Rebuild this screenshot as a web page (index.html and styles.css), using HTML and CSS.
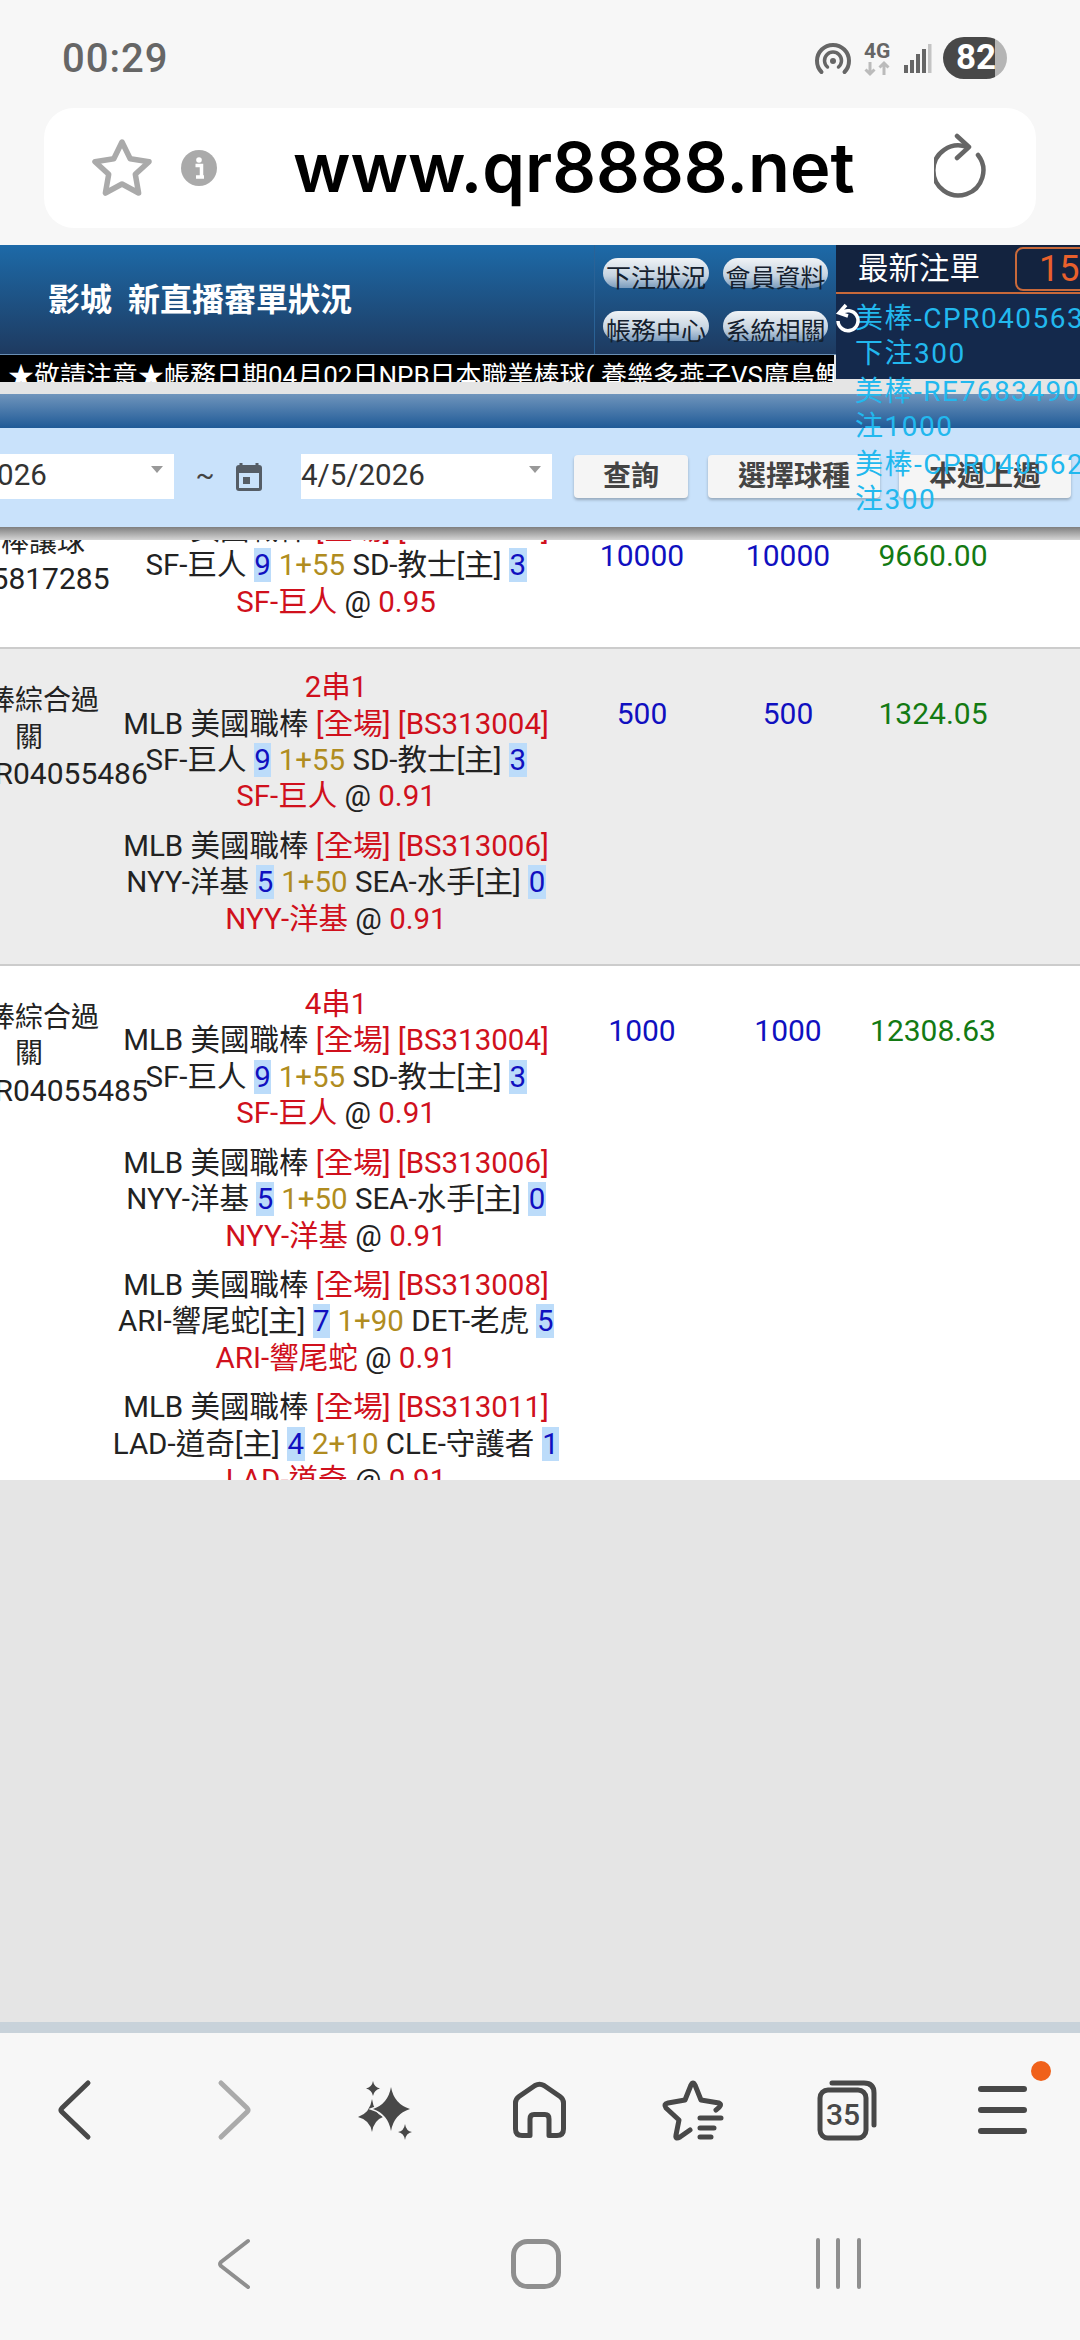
FILE: index.html
```html
<!DOCTYPE html>
<html lang="zh-Hant">
<head>
<meta charset="utf-8">
<title>www.qr8888.net</title>
<link rel="stylesheet" href="styles.css">
</head>
<body>
<div class="app">
  <div class="status">
    <span class="time">00:29</span>
    <div class="status-right">
      <svg class="status-icons" width="125" height="50" viewBox="0 0 125 50">
        <g fill="none" stroke="#666" stroke-linecap="round">
          <path d="M11.5 39A16 16 0 1 1 34.5 39" stroke-width="4"/>
          <path d="M17.5 34A8.5 8.5 0 1 1 28.5 34" stroke-width="3.5"/>
        </g>
        <circle cx="23" cy="28" r="3" fill="#666"/>
        <text class="net" x="54" y="25">4G</text>
        <path d="M60 29V41M55.500 36.500L60 41L64.500 36.500M74 42V30M69.500 34.500L74 30L78.500 34.500" fill="none" stroke="#bbb" stroke-width="3"/>
        <rect x="94" y="32" width="4" height="8" fill="#666"/>
        <rect x="100" y="27" width="4" height="13" fill="#666"/>
        <rect x="106" y="21" width="4" height="19" fill="#666"/>
        <rect x="112" y="16" width="4" height="24" fill="#666"/>
        <rect x="118" y="11" width="3.500" height="29" fill="#c4c4c4"/>
      </svg>
      <div class="battery">82</div>
    </div>
  </div>

  <div class="urlbar">
    <svg class="url-star" width="70" height="70" viewBox="0 0 70 70">
      <polygon points="35,9 43.200,25.700 62,28.700 48.300,41.300 51.600,60 35,51 18.400,60 21.700,41.300 8,28.700 26.800,25.700" fill="none" stroke="#aaa" stroke-width="5.500" stroke-linejoin="round"/>
    </svg>
    <svg class="url-info" width="36" height="36" viewBox="0 0 36 36">
      <circle cx="18" cy="18" r="18" fill="#aaa"/>
      <circle cx="18" cy="10" r="2.800" fill="#fff"/>
      <path d="M14.500 15.500H20.500V26M15 27H23" fill="none" stroke="#fff" stroke-width="3.500"/>
    </svg>
    <span class="url-text">www.qr8888.net</span>
    <svg class="url-reload" width="60" height="70" viewBox="0 0 60 70">
      <path d="M33 14A25 25 0 1 0 44 22" fill="none" stroke="#666" stroke-width="4.500" stroke-linecap="round"/>
      <path d="M23 3L35 14L23 25" fill="none" stroke="#666" stroke-width="4.500" stroke-linecap="round" stroke-linejoin="round"/>
    </svg>
  </div>

  <div class="page">
    <header class="head">
      <div class="head-title">影城&nbsp;&nbsp;新直播審單狀況</div>
      <nav class="head-nav">
        <div class="pill">下注狀況</div>
        <div class="pill">會員資料</div>
        <div class="pill">帳務中心</div>
        <div class="pill">系統相關</div>
      </nav>
    </header>
    <div class="gap-wrap">
      <div class="ticker">★敬請注意★帳務日期04月02日NPB日本職業棒球( 養樂多燕子VS廣島鯉魚</div>
    </div>
    <div class="gray-band"></div>
    <div class="blue-band"></div>
    <div class="filter">
      <div class="date-input"><span>4/5/2026</span><i class="caret"></i></div>
      <span class="tilde">~</span>
      <svg class="calendar" width="30" height="30" viewBox="0 0 30 30">
        <path d="M7 1V5M23 1V5" stroke="#555d66" stroke-width="3"/>
        <path d="M5 3H25Q28 3 28 6V26Q28 29 25 29H5Q2 29 2 26V6Q2 3 5 3Z" fill="#555d66"/>
        <rect x="5" y="11" width="20" height="15" fill="#c9e2fb"/>
        <rect x="9" y="15" width="7" height="7" fill="#555d66"/>
      </svg>
      <div class="date-input date-second"><span>4/5/2026</span><i class="caret"></i></div>
      <div class="btn btn-query">查詢</div>
      <div class="btn btn-wide">選擇球種</div>
      <div class="btn btn-wide btn-last">本週上週</div>
    </div>
    <div class="shade"></div>

    <section class="table-clip">
      <div class="rows">
        <div class="row">
          <div class="c-type">美棒讓球<span class="code">RE5817285</span></div>
          <div class="c-bet">
            <div class="group">
              MLB 美國職棒 <span class="red">[全場] [BS313002]</span><br>
              SF-巨人 <span class="score">9</span> <span class="gold">1+55</span> SD-教士[主] <span class="score">3</span><br>
              <span class="red">SF-巨人</span> @ <span class="red">0.95</span>
            </div>
          </div>
          <div class="c-num blue">10000</div>
          <div class="c-num blue">10000</div>
          <div class="c-num green">9660.00</div>
        </div>

        <div class="row row-alt">
          <div class="c-type">美棒綜合過<br>關<span class="code">CPR04055486</span></div>
          <div class="c-bet">
            <div class="red">2串1</div>
            <div class="group">
              MLB 美國職棒 <span class="red">[全場] [BS313004]</span><br>
              SF-巨人 <span class="score">9</span> <span class="gold">1+55</span> SD-教士[主] <span class="score">3</span><br>
              <span class="red">SF-巨人</span> @ <span class="red">0.91</span>
            </div>
            <div class="group">
              MLB 美國職棒 <span class="red">[全場] [BS313006]</span><br>
              NYY-洋基 <span class="score">5</span> <span class="gold">1+50</span> SEA-水手[主] <span class="score">0</span><br>
              <span class="red">NYY-洋基</span> @ <span class="red">0.91</span>
            </div>
          </div>
          <div class="c-num blue">500</div>
          <div class="c-num blue">500</div>
          <div class="c-num green">1324.05</div>
        </div>

        <div class="row">
          <div class="c-type">美棒綜合過<br>關<span class="code">CPR04055485</span></div>
          <div class="c-bet">
            <div class="red">4串1</div>
            <div class="group">
              MLB 美國職棒 <span class="red">[全場] [BS313004]</span><br>
              SF-巨人 <span class="score">9</span> <span class="gold">1+55</span> SD-教士[主] <span class="score">3</span><br>
              <span class="red">SF-巨人</span> @ <span class="red">0.91</span>
            </div>
            <div class="group">
              MLB 美國職棒 <span class="red">[全場] [BS313006]</span><br>
              NYY-洋基 <span class="score">5</span> <span class="gold">1+50</span> SEA-水手[主] <span class="score">0</span><br>
              <span class="red">NYY-洋基</span> @ <span class="red">0.91</span>
            </div>
            <div class="group">
              MLB 美國職棒 <span class="red">[全場] [BS313008]</span><br>
              ARI-響尾蛇[主] <span class="score">7</span> <span class="gold">1+90</span> DET-老虎 <span class="score">5</span><br>
              <span class="red">ARI-響尾蛇</span> @ <span class="red">0.91</span>
            </div>
            <div class="group">
              MLB 美國職棒 <span class="red">[全場] [BS313011]</span><br>
              LAD-道奇[主] <span class="score">4</span> <span class="gold">2+10</span> CLE-守護者 <span class="score">1</span><br>
              <span class="red">LAD-道奇</span> @ <span class="red">0.91</span>
            </div>
          </div>
          <div class="c-num blue">1000</div>
          <div class="c-num blue">1000</div>
          <div class="c-num green">12308.63</div>
        </div>
      </div>
    </section>

    <div class="fill"></div>
    <div class="strip"></div>

    <aside class="latest">
      <div class="latest-head">
        <span class="latest-title">最新注單</span>
        <span class="latest-count">15</span>
      </div>
      <svg class="latest-refresh" width="26" height="32" viewBox="0 0 26 32">
        <path d="M7 10.500A10 10 0 1 1 4 18" fill="none" stroke="#fff" stroke-width="3.500"/>
        <path d="M12 2L5 10L14 13" fill="none" stroke="#fff" stroke-width="3.500"/>
      </svg>
      <div class="latest-list">
        <p>美棒-CPR04056330<br>下注300</p>
        <p>美棒-RE76834906<br>注1000</p>
        <p>美棒-CPR04056230<br>注300</p>
      </div>
    </aside>
  </div>

  <div class="toolbar">
    <svg class="tool" viewBox="0 0 154 80"><path d="M88 13L62 38Q60 40 62 42L88 67" class="ln"/></svg>
    <svg class="tool" viewBox="0 0 154 80"><path d="M67 13L93 38Q95 40 93 42L67 67" class="ln ln-off"/></svg>
    <svg class="tool" viewBox="0 0 154 80">
      <path d="M64 29Q66 43 75 47Q66 50 64 62Q62 50 50 47Q62 43 64 29Z" class="fl"/>
      <path d="M83 17Q86 34 102 39Q86 44 83 61Q80 44 65 39Q80 34 83 17Z" class="fl fl-cut"/>
      <path d="M65 11Q66 17 72 18.500Q66 20 65 26Q64 20 58 18.500Q64 17 65 11Z" class="fl"/>
      <path d="M97 54Q98 61 104 62Q98 63 97 70Q96 63 90 62Q96 61 97 54Z" class="fl"/>
    </svg>
    <svg class="tool" viewBox="0 0 154 80"><path d="M68 65.500H60Q53.500 65.500 53.500 59V33Q53.500 29 57 26.500L73 15.500Q77.500 13 82 15.500L98 26.500Q101.500 29 101.500 33V59Q101.500 65.500 95 65.500H87V49Q87 44.500 83 44.500H72Q68 44.500 68 49Z" class="ln"/></svg>
    <svg class="tool" viewBox="0 0 154 80">
      <path d="M100 40Q107 35 103 33L85 30L79 15Q77 11 75 15L69 30L52 33Q47 34 50 38L63 50L60 65Q59 70 64 67L74 60" class="ln"/>
      <path d="M84 48H105M84 58H98M84 67H95" class="ln"/>
    </svg>
    <svg class="tool" viewBox="0 0 154 80">
      <rect x="50" y="20" width="46" height="48" rx="8" class="ln"/>
      <path d="M62 13H94Q104 13 104 23V55" class="ln"/>
      <text class="tabs" x="73" y="55">35</text>
    </svg>
    <svg class="tool tool-menu" viewBox="0 0 154 80">
      <path d="M57 19H100M57 40H100M57 61H100" class="ln ln-bar"/>
      <circle cx="117" cy="1" r="10" fill="#f0611a"/>
    </svg>
  </div>

  <div class="sysnav">
    <svg class="sys" viewBox="0 0 301 60"><path d="M164 7L137 28Q135 30 137 32L164 53" class="ln-sys"/></svg>
    <svg class="sys" viewBox="0 0 301 60"><rect x="128.500" y="7.500" width="45" height="45" rx="14" class="ln-sys ln-sys-home"/></svg>
    <svg class="sys" viewBox="0 0 301 60"><path d="M132 6V53M152 6V53M173 6V53" class="ln-sys"/></svg>
  </div>
</div>
</body>
</html>
```

FILE: styles.css
```css
* { box-sizing: border-box; }
html, body { margin: 0; padding: 0; }
body {
  font-family: Roboto, "Noto Sans CJK TC", sans-serif;
  background: #f7f7f7;
}
.app {
  width: 1080px;
  height: 2340px;
  overflow: hidden;
  display: flex;
  flex-direction: column;
  background: #f7f7f7;
}

/* status bar */
.status {
  height: 108px;
  display: flex;
  align-items: center;
  justify-content: space-between;
  padding: 8px 73px 0 62px;
}
.time { font-size: 40px; font-weight: 500; color: #666; letter-spacing: 1px; }
.status-right { display: flex; align-items: center; }
.net { font: 700 21px Roboto, sans-serif; fill: #666; }
.battery {
  width: 64px;
  height: 42px;
  margin-left: 8px;
  border-radius: 21px;
  background: linear-gradient(90deg, #484848 81%, #b5b5b5 81%);
  color: #fff;
  font-size: 35px;
  font-weight: 700;
  line-height: 42px;
  padding-left: 13px;
}

/* url bar */
.urlbar {
  height: 120px;
  margin: 0 44px 17px;
  background: #fff;
  border-radius: 30px;
  display: flex;
  align-items: center;
}
.url-star { margin-left: 43px; flex: none; }
.url-info { margin-left: 24px; flex: none; }
.url-text {
  margin-left: 76px;
  font-family: Inter, "Noto Sans", sans-serif;
  font-size: 68.500px;
  font-weight: 600;
  color: #000;
  line-height: 1;
}
.url-reload { margin-left: auto; margin-right: 42px; flex: none; }

/* page */
.page { position: relative; display: flex; flex-direction: column; flex: none; height: 1788px; }
.head {
  height: 110px;
  display: flex;
  background: linear-gradient(180deg, #1d6aa8 0%, #1e3a60 100%);
  border-bottom: 1px solid #6a8fb5;
}
.head-title {
  width: 594px;
  padding: 37px 0 0 48px;
  font-size: 32px;
  font-weight: 700;
  line-height: 36px;
  color: #fff;
}
.head-nav {
  width: 242px;
  padding: 13px 0 0 8px;
  border-left: 1px solid #2a6296;
  display: grid;
  grid-template-columns: 106px 105px;
  grid-auto-rows: 30px;
  column-gap: 14px;
  row-gap: 23px;
  align-content: start;
}
.pill {
  height: 30px;
  border-radius: 15px;
  background: linear-gradient(180deg, #f0f3f6 0%, #c5d3e0 60%, #7a9bbd 100%);
  color: #14202e;
  font-size: 25px;
  line-height: 42px;
  text-align: center;
  white-space: nowrap;
}
.gap-wrap { height: 27px; background: #e5e5e5; }
.ticker {
  width: 834px;
  height: 27px;
  overflow: hidden;
  background: #000;
  color: #fff;
  font-size: 26px;
  line-height: 42px;
  padding-left: 8px;
  white-space: nowrap;
}
.gray-band { height: 12px; background: #e5e5e5; }
.blue-band { height: 34px; background: linear-gradient(180deg, #7095bc 0%, #1f5a97 100%); }
.filter {
  height: 99px;
  background: #c9e2fb;
  display: flex;
  align-items: center;
  padding-bottom: 2px;
  margin-left: -77px;
  width: 1157px;
}
.date-input {
  width: 251px;
  height: 45px;
  flex: none;
  background: #fff;
  color: #333;
  font-size: 29.500px;
  line-height: 42px;
  display: flex;
  justify-content: space-between;
}
.caret {
  width: 0;
  height: 0;
  margin: 12px 11px 0 0;
  border-left: 6.5px solid transparent;
  border-right: 6.5px solid transparent;
  border-top: 7px solid #999;
}
.tilde { width: 20px; margin-left: 21px; flex: none; font-size: 28px; line-height: 36px; color: #444; text-align: center; margin-bottom: 4px; }
.calendar { margin-left: 19px; flex: none; }
.date-second { margin-left: 37px; }
.btn {
  height: 43px;
  flex: none;
  border-radius: 4px;
  background: #f5f5f5;
  box-shadow: 0 2px 3px rgba(0, 0, 0, .25);
  color: #444;
  font-size: 28px;
  font-weight: 700;
  line-height: 43px;
  text-align: center;
}
.btn-query { width: 114px; margin-left: 22px; }
.btn-wide { width: 172px; margin-left: 20px; }
.btn-last { margin-left: 19px; }
.shade { height: 13px; background: linear-gradient(180deg, #7f7f7f 0%, #d5d5d5 100%); }

/* table */
.table-clip { height: 940px; overflow: hidden; background: #fff; }
.rows { margin: -49px 0 0 -41px; width: 1121px; font-size: 28px; line-height: 36.4px; color: #222; }
.row {
  display: grid;
  grid-template-columns: 140px 474px 138px 154px 136px 79px;
  padding-bottom: 27px;
  border-bottom: 2px solid #ccc;
  background: #fff;
  text-align: center;
}
.row-alt { background: #ececec; }
.row:last-child { border-bottom: 0; }
.c-type { padding-top: 34px; }
.code { display: block; width: 140px; margin-left: -3px; font-size: 30px; text-align: left; white-space: nowrap; }
.c-bet { padding-top: 20px; font-size: 29.500px; white-space: nowrap; }
.group + .group { margin-top: 13px; }
.c-num { padding-top: 47px; font-size: 30px; }
.red { color: #d0101c; }
.gold { color: #b08c20; }
.blue { color: #1010c0; }
.green { color: #137a13; }
.score { color: #1010c0; background: #bcdcfa; padding: 0 0.5px; }
.fill { height: 542px; background: #e5e5e5; }
.strip { height: 11px; background: #c8d2da; }

/* latest bets overlay */
.latest {
  position: absolute;
  left: 836px;
  top: 0;
  width: 244px;
  height: 134px;
  background: #14294c;
  color: #fff;
}
.latest-head {
  height: 49px;
  border-bottom: 2px solid #c8693a;
  background: #13233f;
  display: flex;
  align-items: center;
  padding-left: 22px;
  white-space: nowrap;
}
.latest-title { font-size: 30.500px; line-height: 44px; }
.latest-count {
  width: 90px;
  height: 44px;
  flex: none;
  margin-left: 35px;
  border: 2px solid #c8693a;
  border-radius: 8px;
  color: #e8602c;
  font-size: 36px;
  line-height: 40px;
  padding-left: 22px;
}
.latest-refresh { position: absolute; left: -2px; top: 58px; }
.latest-list {
  padding: 7px 0 0 19px;
  color: #22b8ee;
  font-size: 28px;
  line-height: 35px;
  letter-spacing: 1.5px;
  white-space: nowrap;
}
.latest-list p { margin: 0 0 3px; }

/* browser toolbar */
.toolbar { display: grid; grid-template-columns: repeat(7, 154px); padding: 37px 0 84px; flex: none; }
.tool { width: 154px; height: 80px; display: block; overflow: visible; }
.ln { fill: none; stroke: #484848; stroke-width: 5; stroke-linecap: round; stroke-linejoin: round; }
.ln-off { stroke: #aaa; }
.ln-bar { stroke-width: 6; }
.fl { fill: #484848; }
.fl-cut { stroke: #f7f7f7; stroke-width: 3; paint-order: stroke; }
.tabs { font: 500 30px Roboto, sans-serif; fill: #484848; text-anchor: middle; }

/* system nav */
.sysnav { display: grid; grid-template-columns: repeat(3, 301px); padding-left: 84px; flex: none; }
.sys { width: 301px; height: 60px; display: block; }
.ln-sys { fill: none; stroke: #8f8f8f; stroke-width: 4; stroke-linecap: round; stroke-linejoin: round; }
.ln-sys-home { stroke-width: 5; }
```
